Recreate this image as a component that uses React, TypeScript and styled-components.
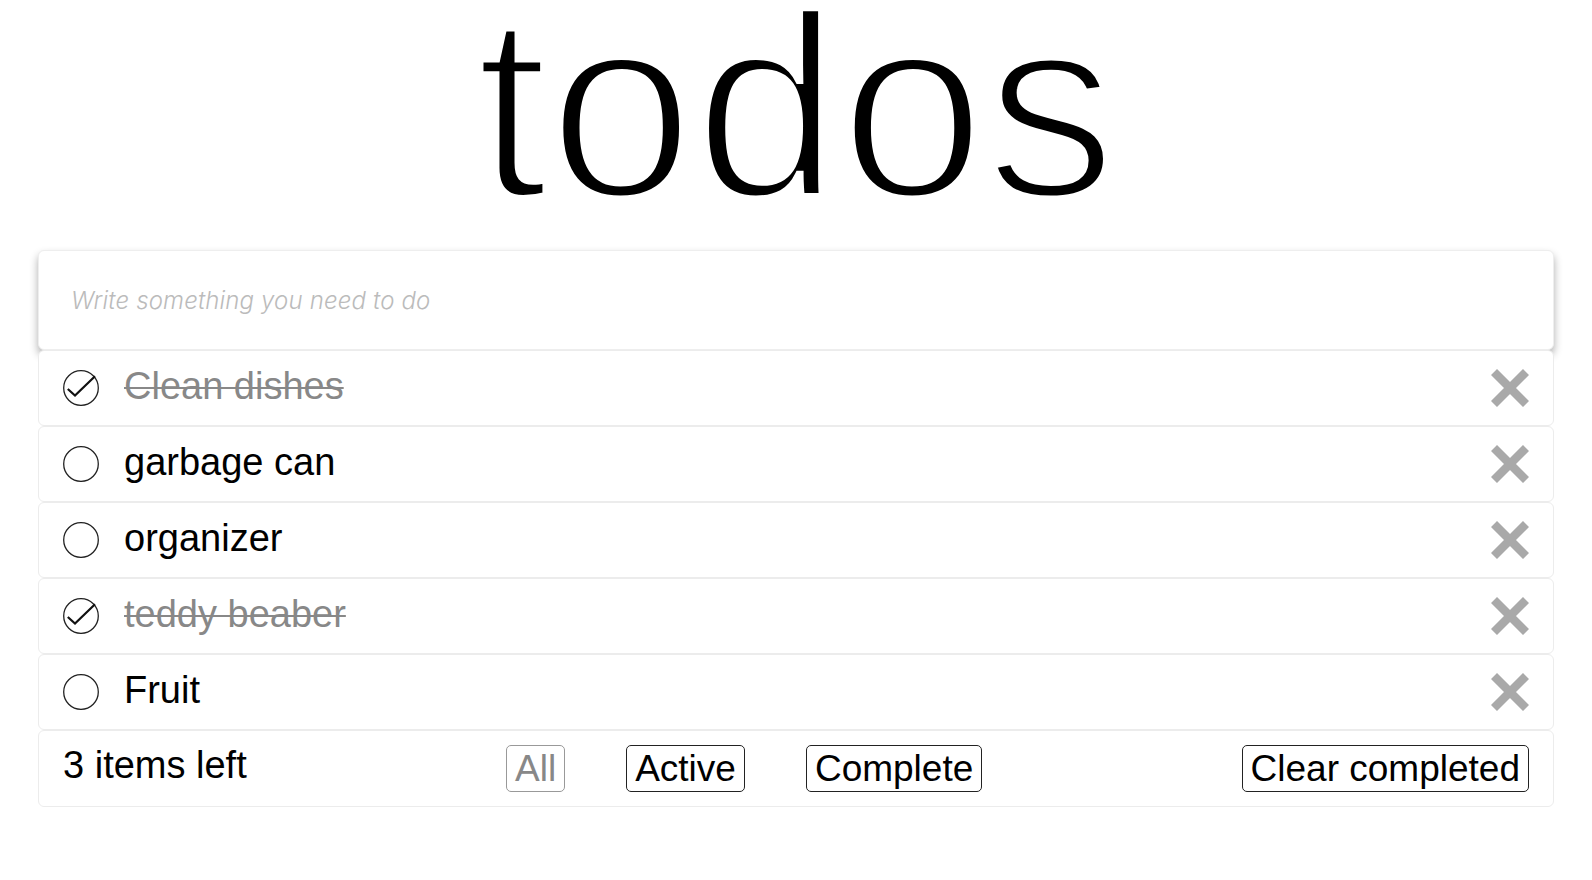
import React from 'react';
import styled, { createGlobalStyle } from 'styled-components';

const GlobalStyle = createGlobalStyle`
    body {
        margin: 8px;
        background: #fff;
        font-family: "Liberation Sans", Arial, sans-serif;
        color: #000;
    }
`;

const Page = styled.div`
    padding: 0 30px;
`;

const Title = styled.h1`
    margin: 0 0 44px;
    text-align: center;
    font-size: 262px;
    font-weight: 300;
    line-height: 198px;
    -webkit-text-stroke: 8px #fff;
`;

const Card = styled.section`
    display: flex;
    flex-flow: column nowrap;
`;

const NewTodo = styled.input`
    display: block;
    box-sizing: border-box;
    width: 100%;
    height: 100px;
    padding: 0 32px;
    border: 1px solid #eee;
    border-radius: 6px;
    box-shadow: 0 5px 8px rgba(0, 0, 0, 0.32);
    outline: none;
    font-family: Inter, "Open Sans", sans-serif;
    font-size: 24px;
    font-weight: 300;
    font-style: italic;
    letter-spacing: 0.15px;
    background: #fff;

    &::placeholder {
        color: #bbb;
    }
`;

const Row = styled.div`
    position: relative;
    box-sizing: border-box;
    height: 76px;
    display: flex;
    flex-flow: row nowrap;
    align-items: center;
    padding: 0 24px;
    border: 1px solid #ececec;
    border-radius: 6px;
    background: #fff;
`;

const Label = styled.span<{ $done?: boolean }>`
    margin-left: 25px;
    padding-bottom: 4px;
    font-size: 38px;
    color: ${p => (p.$done ? '#888' : '#000')};
    text-decoration: ${p => (p.$done ? 'line-through' : 'none')};
    text-decoration-thickness: 2px;
`;

const Remove = styled.button`
    margin-left: auto;
    width: 38px;
    height: 38px;
    padding: 0;
    border: 0;
    background: none;
    display: flex;
`;

const Footer = styled(Row)`
    height: 77px;
    justify-content: space-between;
`;

const Count = styled.span`
    font-size: 38px;
    padding-bottom: 6px;
`;

const Filters = styled.div`
    display: flex;
    gap: 61px;
    padding: 0 30px;
`;

const FilterButton = styled.button<{ $selected?: boolean }>`
    padding: 2px 8px 1px;
    border: 1px solid ${p => (p.$selected ? '#999' : '#222')};
    border-radius: 5px;
    background: #fff;
    font-family: "Liberation Sans", Arial, sans-serif;
    font-size: 37px;
    color: ${p => (p.$selected ? '#888' : '#000')};
`;

const Check = ({ done }: { done: boolean }) => (
    <svg width="36" height="36" viewBox="0 0 36 36">
        <circle cx="18" cy="18" r="17.3" fill="none" stroke="#222" strokeWidth="1.3"/>
        {done && (
            <path d="M4.8 19 L12 25.6 L32 6.2" fill="none" stroke="#111" strokeWidth="2.2"/>
        )}
    </svg>
);

const Cross = () => (
    <svg width="38" height="38" viewBox="0 0 38 38">
        <path d="M3 3 L35 35 M35 3 L3 35" stroke="#a9a9a9" strokeWidth="8.5"/>
    </svg>
);

const todos = [
    { text: 'Clean dishes', done: true },
    { text: 'garbage can', done: false },
    { text: 'organizer', done: false },
    { text: 'teddy beaber', done: true },
    { text: 'Fruit', done: false },
];

const App = () => (
    <Page>
        <GlobalStyle/>
        <Title>todos</Title>
        <Card>
            <NewTodo placeholder="Write something you need to do"/>
            {todos.map(t => (
                <Row key={t.text}>
                    <Check done={t.done}/>
                    <Label $done={t.done}>{t.text}</Label>
                    <Remove aria-label="delete"><Cross/></Remove>
                </Row>
            ))}
            <Footer>
                <Count>3 items left</Count>
                <Filters>
                    <FilterButton $selected>All</FilterButton>
                    <FilterButton>Active</FilterButton>
                    <FilterButton>Complete</FilterButton>
                </Filters>
                <FilterButton>Clear completed</FilterButton>
            </Footer>
        </Card>
    </Page>
);

export default App;
